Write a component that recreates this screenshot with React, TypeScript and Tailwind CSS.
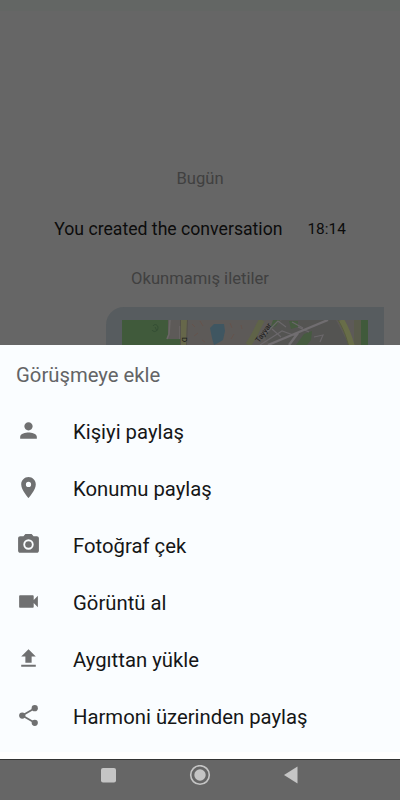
import type { ReactNode } from "react"

const actions: { label: string; icon: ReactNode }[] = [
  {
    label: "Kişiyi paylaş",
    icon: <path d="M12 12c2.2 0 4-1.8 4-4s-1.800-4-4-4-4 1.800-4 4 1.800 4 4 4zm0 2c-2.700 0-8 1.300-8 4v2h16v-2c0-2.700-5.300-4-8-4z" />,
  },
  {
    label: "Konumu paylaş",
    icon: <path d="M12 2C8.130 2 5 5.130 5 9c0 5.250 7 13 7 13s7-7.750 7-13c0-3.870-3.130-7-7-7zm0 9.500a2.500 2.500 0 1 1 0-5 2.500 2.500 0 0 1 0 5z" />,
  },
  {
    label: "Fotoğraf çek",
    icon: (
      <>
        <circle cx="12" cy="12" r="3.200" />
        <path d="M9 2 7.170 4H4c-1.100 0-2 .9-2 2v12c0 1.100.9 2 2 2h16c1.100 0 2-.9 2-2V6c0-1.100-.9-2-2-2h-3.170L15 2H9zm3 15a5 5 0 1 1 0-10 5 5 0 0 1 0 10z" />
      </>
    ),
  },
  {
    label: "Görüntü al",
    icon: <path d="M17 10.500V7c0-.55-.45-1-1-1H4c-.55 0-1 .45-1 1v10c0 .55.45 1 1 1h12c.55 0 1-.45 1-1v-3.500l4 4v-11l-4 4z" />,
  },
  {
    label: "Aygıttan yükle",
    icon: <path d="M9 16h6v-6h4l-7-7-7 7h4v6zm-4 2h14v2H5v-2z" />,
  },
  {
    label: "Harmoni üzerinden paylaş",
    icon: (
      <>
        <circle cx="18" cy="5" r="3" />
        <circle cx="6" cy="12" r="3" />
        <circle cx="18" cy="19" r="3" />
        <path d="M18 5 6 12l12 7" fill="none" stroke="currentColor" strokeWidth="1.700" />
      </>
    ),
  },
]

function MapPreview() {
  return (
    <svg width="246" height="25" viewBox="0 0 246 25" className="block">
      <rect width="246" height="25" fill="#5d5a58" />
      <path d="M0 0h46v19h12v6H0z" fill="#405a3b" />
      <path d="M31 6c2-3 5-1 5 2s-4 5-6 2M33 7l2 4" fill="none" stroke="#344e34" strokeWidth="1" />
      <path d="M48 0l-1 14-2 5M58 6v13" fill="none" stroke="#6b6767" strokeWidth="1.600" />
      <path d="M59 0h6l-1 25h-5z" fill="#66674a" />
      <path d="M58.500 0v25M65.500 0l-1 25" stroke="#504d44" strokeWidth=".7" />
      <path d="M88 8l4-4h10l1 7-2 9-5 3-4 2-2-7z" fill="#3f5661" />
      <path d="M70 4l3 3M78 1l3 5M72 16l4-3M80 20l3 2M108 3l2 5M112 14l-3 5M119 5l1 4" stroke="#675047" strokeWidth=".7" />
      <path d="M148 25l-6-9 18-16h54l13 25z" fill="#545452" />
      <path d="M140 0c-5 8-7 16-14 25" fill="none" stroke="#5f6348" strokeWidth="6" />
      <path d="M151 0h7l-4 6-6 3zM167 1h9v6l-7 2zM182 14l8-3-1 9-4 5h-11z" fill="#465b40" />
      <path d="M142 15l14-14 8 6M138 25l22-14 14 5M150 9l9 8M176 7l11 5M192 17l9-2-3 7M170 2l11 6" fill="none" stroke="#6a676a" strokeWidth="1.200" />
      <path d="M146 25l31-13 29-12M167 25l9-12" fill="none" stroke="#706d70" strokeWidth="2.400" />
      <rect x="232" width="7" height="25" fill="#595b4b" />
      <rect x="239" width="7" height="25" fill="#405a3b" />
      <path d="M219 0c5 8 8 16 11 27" fill="none" stroke="#686d48" strokeWidth="6" />
      <path d="M216 0c5 8 8 16 11 27" fill="none" stroke="#53583c" strokeWidth=".8" />
      <text x="137" y="23" transform="rotate(-54 137 23)" fontSize="7.500" fontFamily="Roboto, sans-serif" fill="#181817">Tayyar</text>
      <text x="60" y="17" transform="rotate(90 60 17)" fontSize="8" fontFamily="Roboto, sans-serif" fill="#181817">D</text>
    </svg>
  )
}

function Conversation() {
  return (
    <div className="h-[345px] overflow-hidden">
      <div className="h-[11px] bg-[#636664]" />
      <p className="mt-[157px] text-center text-[16.600px] leading-[22px] text-[#404040]">Bugün</p>
      <div className="mt-7 flex justify-center gap-[25px] leading-[22px] text-[#0c0c0c]">
        <span className="text-[17.650px]">You created the conversation</span>
        <span className="text-[15.400px]">18:14</span>
      </div>
      <p className="mt-7 text-center text-[16.600px] leading-[22px] text-[#404040]">Okunmamış iletiler</p>
      <div className="mt-[17px] mr-4 ml-[106px] h-20 rounded-tl-[18px] bg-[#575c5f] px-4 pt-[13px]">
        <MapPreview />
      </div>
    </div>
  )
}

function ShareSheet() {
  return (
    <div className="h-[414px] border-b-[7px] border-white bg-[#fafdff]">
      <h2 className="px-4 pt-4 text-[20.300px] leading-7 text-[#636466]">Görüşmeye ekle</h2>
      <ul className="mt-[14px]">
        {actions.map((a) => (
          <li key={a.label} className="flex h-[57px] items-center pl-4">
            <svg width="25" height="25" viewBox="0 0 24 24" fill="currentColor" className="mr-8 mb-0.5 text-[#6f7071]">
              {a.icon}
            </svg>
            <span className="text-[20.300px] leading-7 text-[#151617]">{a.label}</span>
          </li>
        ))}
      </ul>
    </div>
  )
}

function NavBar() {
  return (
    <div className="flex h-[41px] items-start justify-center border-t border-[#333333] pt-[5px]">
      <svg width="200" height="22" viewBox="0 0 200 22" fill="#c5c5c5">
        <rect x="1" y="3" width="15" height="14.500" rx="2" />
        <circle cx="100" cy="10" r="9.300" fill="none" stroke="#c5c5c5" strokeWidth="1.600" />
        <circle cx="100" cy="10" r="5.700" />
        <path d="M184 10l13.500-8.500v17z" />
      </svg>
    </div>
  )
}

export default function App() {
  return (
    <div className="h-[800px] w-[400px] overflow-hidden bg-[#666666] font-[Roboto,sans-serif]">
      <Conversation />
      <ShareSheet />
      <NavBar />
    </div>
  )
}
